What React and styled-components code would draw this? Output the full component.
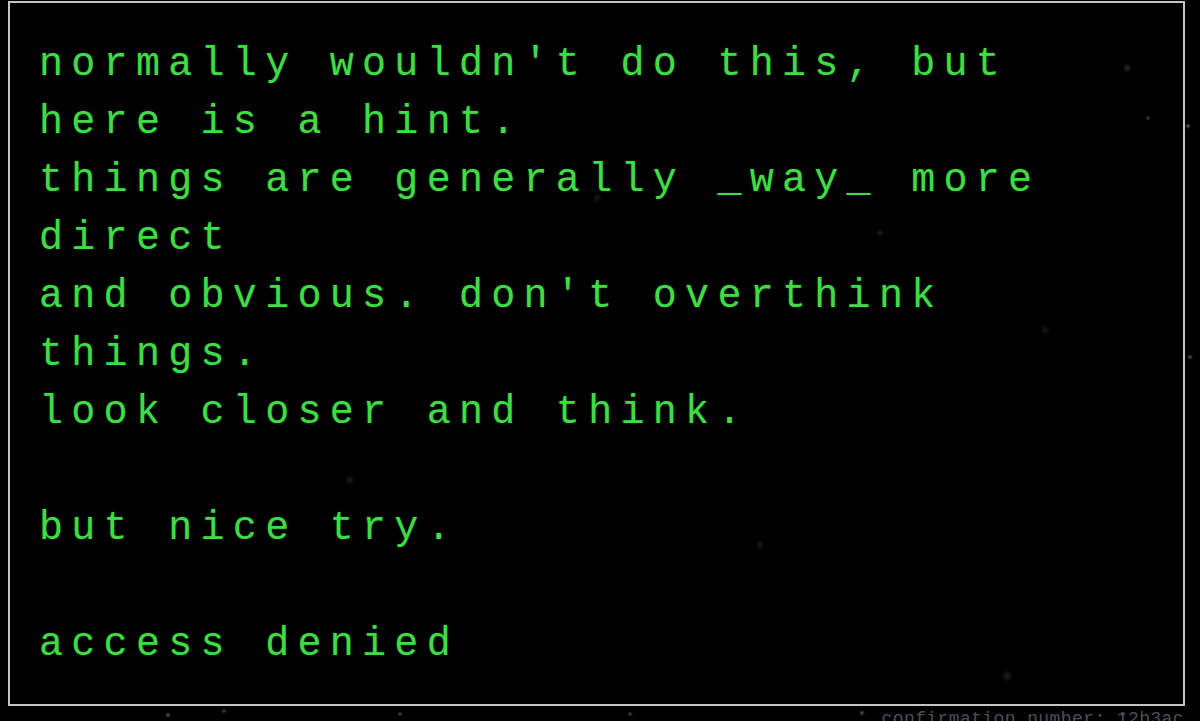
import styled, { createGlobalStyle } from "styled-components";

const GlobalStyle = createGlobalStyle`
    html, body {
        margin: 0;
        padding: 0;
        background-color: #000;
        overflow: hidden;
    }
    body {
        background-image:
            radial-gradient(circle at 1188px 126px, rgba(150,170,210,0.55) 0, rgba(150,170,210,0) 3px),
            radial-gradient(circle at 1190px 357px, rgba(150,170,210,0.5) 0, rgba(150,170,210,0) 3px),
            radial-gradient(circle at 1148px 118px, rgba(150,170,210,0.35) 0, rgba(150,170,210,0) 3px),
            radial-gradient(circle at 1127px 68px, rgba(150,170,210,0.25) 0, rgba(150,170,210,0) 5px),
            radial-gradient(circle at 168px 715px, rgba(150,170,210,0.5) 0, rgba(150,170,210,0) 3px),
            radial-gradient(circle at 224px 711px, rgba(150,170,210,0.4) 0, rgba(150,170,210,0) 3px),
            radial-gradient(circle at 400px 714px, rgba(150,170,210,0.4) 0, rgba(150,170,210,0) 3px),
            radial-gradient(circle at 630px 714px, rgba(150,170,210,0.4) 0, rgba(150,170,210,0) 3px),
            radial-gradient(circle at 862px 713px, rgba(150,170,210,0.5) 0, rgba(150,170,210,0) 3px),
            radial-gradient(circle at 1123px 714px, rgba(150,170,210,0.5) 0, rgba(150,170,210,0) 3px),
            radial-gradient(circle at 880px 233px, rgba(150,170,210,0.2) 0, rgba(150,170,210,0) 4px),
            radial-gradient(circle at 1007px 676px, rgba(150,170,210,0.18) 0, rgba(150,170,210,0) 6px),
            radial-gradient(circle at 597px 198px, rgba(150,170,210,0.15) 0, rgba(150,170,210,0) 5px),
            radial-gradient(circle at 350px 480px, rgba(150,170,210,0.15) 0, rgba(150,170,210,0) 5px),
            radial-gradient(circle at 760px 545px, rgba(150,170,210,0.15) 0, rgba(150,170,210,0) 5px),
            radial-gradient(circle at 1045px 330px, rgba(150,170,210,0.15) 0, rgba(150,170,210,0) 5px);
        background-repeat: no-repeat;
    }
`;

const lines = [
    "normally wouldn't do this, but",
    "here is a hint.",
    "things are generally _way_ more",
    "direct",
    "and obvious. don't overthink",
    "things.",
    "look closer and think.",
    "",
    "but nice try.",
    "",
    "access denied",
];

export default function App() {
    return (
        <>
            <GlobalStyle />
            <Page>
                <Terminal>
                    {lines.map((line, i) => (
                        <Line key={i}>{line || "\u00a0"}</Line>
                    ))}
                </Terminal>
                <Footer>confirmation number: 12b3ac</Footer>
            </Page>
        </>
    );
}

const Page = styled.div`
    width: 1200px;
    height: 721px;
    box-sizing: border-box;
    padding: 1px 15px 0 8px;
    display: flex;
    flex-direction: column;
    overflow: hidden;
`;

const Terminal = styled.div`
    height: 705px;
    box-sizing: border-box;
    border: 2px solid #c4c4c4;
    padding: 33px 20px 0 29px;
    display: flex;
    flex-direction: column;
    flex-shrink: 0;
`;

const Line = styled.div`
    font-family: "Liberation Mono", "DejaVu Sans Mono", monospace;
    font-size: 40px;
    line-height: 58px;
    height: 58px;
    letter-spacing: 8.3px;
    color: #3fdc45;
    white-space: pre;
    text-shadow: 0 0 2px rgba(63, 220, 69, 0.35);
`;

const Footer = styled.div`
    align-self: flex-end;
    margin: 3px 1px 0 0;
    font-family: "Liberation Mono", monospace;
    font-size: 18px;
    line-height: 20px;
    letter-spacing: 0.4px;
    color: #4a4f57;
    white-space: pre;
`;
